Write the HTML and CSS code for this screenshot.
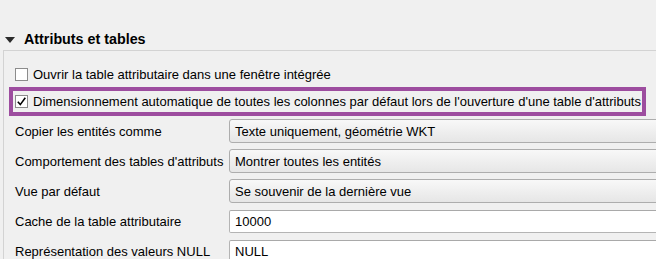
FILE: index.html
```html
<!DOCTYPE html>
<html lang="fr">
<head>
<meta charset="utf-8">
<link rel="stylesheet" href="styles.css">
</head>
<body>
<div class="header">
  <svg class="tri" width="10" height="6" viewBox="0 0 10 6"><polygon points="0,0 10,0 5,6" fill="#2b2b2b"/></svg>
  <span class="title">Attributs et tables</span>
</div>
<div class="panel">
  <div class="check-row">
    <span class="box"></span>
    <span>Ouvrir la table attributaire dans une fenêtre intégrée</span>
  </div>
  <div class="highlight">
    <div class="check-row inner">
      <span class="box checked"><svg width="11" height="11" viewBox="0 0 11 11"><path d="M1.8 5.8 L4.3 8.6 L9.3 1.8" fill="none" stroke="#000" stroke-width="1.6"/></svg></span>
      <span>Dimensionnement automatique de toutes les colonnes par défaut lors de l'ouverture d'une table d'attributs</span>
    </div>
  </div>
  <div class="form">
    <span class="label">Copier les entités comme</span>
    <div class="combo">Texte uniquement, géométrie WKT</div>
    <span class="label">Comportement des tables d'attributs</span>
    <div class="combo">Montrer toutes les entités</div>
    <span class="label">Vue par défaut</span>
    <div class="combo">Se souvenir de la dernière vue</div>
    <span class="label">Cache de la table attributaire</span>
    <div class="input">10000</div>
    <span class="label">Représentation des valeurs NULL</span>
    <div class="input">NULL</div>
  </div>
</div>
</body>
</html>
```
FILE: styles.css
```css
html, body {
  margin: 0;
  padding: 0;
}
body {
  width: 656px;
  height: 259px;
  overflow: hidden;
  background: #f0f0f0;
  font-family: "Liberation Sans", Arial, sans-serif;
  font-size: 13px;
  color: #000;
  padding-top: 29px;
  box-sizing: border-box;
}
.header {
  height: 21px;
  display: flex;
  align-items: center;
  padding-left: 5px;
}
.tri {
  display: block;
  margin-right: 9px;
}
.title {
  font-weight: bold;
  font-size: 14.3px;
  line-height: 21px;
}
.panel {
  margin-left: 3px;
  border-top: 1px solid #d3d3d3;
  border-left: 1px solid #d3d3d3;
  padding: 13px 0 0 11px;
}
.check-row {
  display: flex;
  align-items: center;
  height: 20px;
  white-space: nowrap;
}
.box {
  width: 13px;
  height: 13px;
  box-sizing: border-box;
  border: 1px solid #8c8c8c;
  background: #fff;
  margin-right: 5px;
  flex: none;
  display: flex;
  align-items: center;
  justify-content: center;
}
.highlight {
  margin: 3px 0 0 -6px;
  width: 637px;
  box-sizing: border-box;
  border: 4px solid #9d4d9f;
  padding-left: 2px;
}
.check-row.inner {
  height: 21px;
}
.form {
  margin-top: 3px;
  display: grid;
  grid-template-columns: 214px 450px;
  grid-auto-rows: 24px;
  row-gap: 6px;
  align-items: center;
}
.label {
  white-space: nowrap;
}
.combo, .input {
  height: 24px;
  box-sizing: border-box;
  display: flex;
  align-items: center;
  padding-left: 5px;
  white-space: nowrap;
}
.combo {
  border: 1px solid #adadad;
  border-radius: 3px;
  background: linear-gradient(#f8f8f8, #e6e6e6);
}
.input {
  height: 23px;
  margin-top: 1px;
  align-self: start;
  border: 1px solid #b4b4b4;
  border-top-color: #a9a9a9;
  border-radius: 2px;
  background: #fff;
}
```
